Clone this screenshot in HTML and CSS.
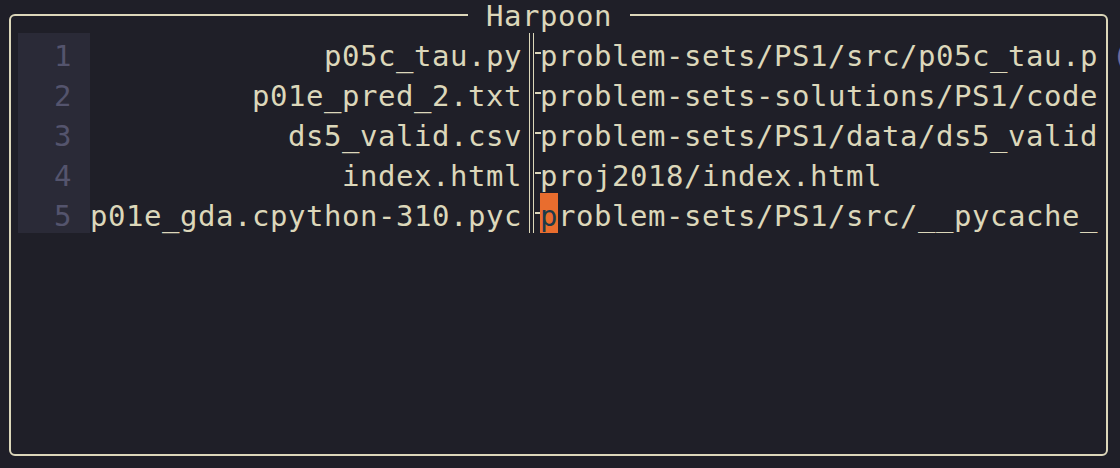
FILE: index.html
```html
<!DOCTYPE html>
<html lang="en">
<head>
<meta charset="utf-8">
<title>Harpoon</title>
<link rel="stylesheet" href="styles.css">
</head>
<body>
<div class="screen">
  <section class="box">
    <h1 class="title">Harpoon</h1>
    <div class="row"><span class="num">1</span><span class="name">p05c_tau.py</span><span class="sep"></span><span class="path">problem-sets/PS1/src/p05c_tau.p</span></div>
    <div class="row"><span class="num">2</span><span class="name">p01e_pred_2.txt</span><span class="sep"></span><span class="path">problem-sets-solutions/PS1/code</span></div>
    <div class="row"><span class="num">3</span><span class="name">ds5_valid.csv</span><span class="sep"></span><span class="path">problem-sets/PS1/data/ds5_valid</span></div>
    <div class="row"><span class="num">4</span><span class="name">index.html</span><span class="sep"></span><span class="path">proj2018/index.html</span></div>
    <div class="row"><span class="num">5</span><span class="name">p01e_gda.cpython-310.pyc</span><span class="sep"></span><span class="cursor">p</span><span class="path">roblem-sets/PS1/src/__pycache_</span></div>
  </section>
  <div class="edge"><span class="ghost">(</span></div>
</div>
</body>
</html>
```
FILE: styles.css
```css
html, body {
  margin: 0;
  padding: 0;
  background: #1f1f28;
}
body {
  width: 1120px;
  height: 468px;
  overflow: hidden;
  font-family: "DejaVu Sans Mono", "Liberation Mono", monospace;
  font-size: 29px;
  letter-spacing: 0.54px;
  color: #dcd7ba;
}
.screen {
  display: flex;
  align-items: flex-start;
  width: 1120px;
  height: 468px;
}
.box {
  position: relative;
  flex: none;
  box-sizing: border-box;
  margin: 14px 0 0 9px;
  width: 1099px;
  height: 441.5px;
  border: 2px solid #dcd7ba;
  border-radius: 6px;
  padding: 17px 0 0 7px;
}
.title {
  position: absolute;
  left: 457px;
  top: -23px;
  margin: 0;
  box-sizing: border-box;
  height: 40px;
  padding: 6px 18px 0;
  line-height: 34px;
  font-size: inherit;
  font-weight: normal;
  background: #1f1f28;
  color: #dcd7ba;
}
.row {
  display: flex;
  height: 40px;
}
.row > span {
  box-sizing: border-box;
  height: 40px;
  padding-top: 6px;
  line-height: 34px;
  white-space: pre;
}
.num {
  flex: none;
  width: 72px;
  padding-right: 18px;
  text-align: right;
  background: #2a2a37;
  color: #54546d;
}
.name {
  flex: none;
  width: 432px;
  text-align: right;
}
.sep {
  flex: none;
  width: 18px;
  position: relative;
}
.sep::before {
  content: "";
  position: absolute;
  left: 6.8px;
  top: 0;
  bottom: 0;
  box-sizing: border-box;
  border-left: 1.6px solid #dcd7ba;
  border-right: 1.6px solid #dcd7ba;
  width: 5px;
}
.sep::after {
  content: "";
  position: absolute;
  left: 12.5px;
  top: 19.2px;
  width: 6.5px;
  height: 1.6px;
  background: #dcd7ba;
}
.cursor {
  flex: none;
  width: 18px;
  background: #e96d2e;
  color: #1c3a4a;
  position: relative;
}
.path {
  flex: 1;
  overflow: hidden;
}
.edge {
  flex: 1;
  margin-left: 4px;
  padding-top: 33px;
  overflow: hidden;
}
.ghost {
  display: block;
  box-sizing: border-box;
  height: 40px;
  padding-top: 6px;
  line-height: 34px;
  color: #6f6c98;
}
```
